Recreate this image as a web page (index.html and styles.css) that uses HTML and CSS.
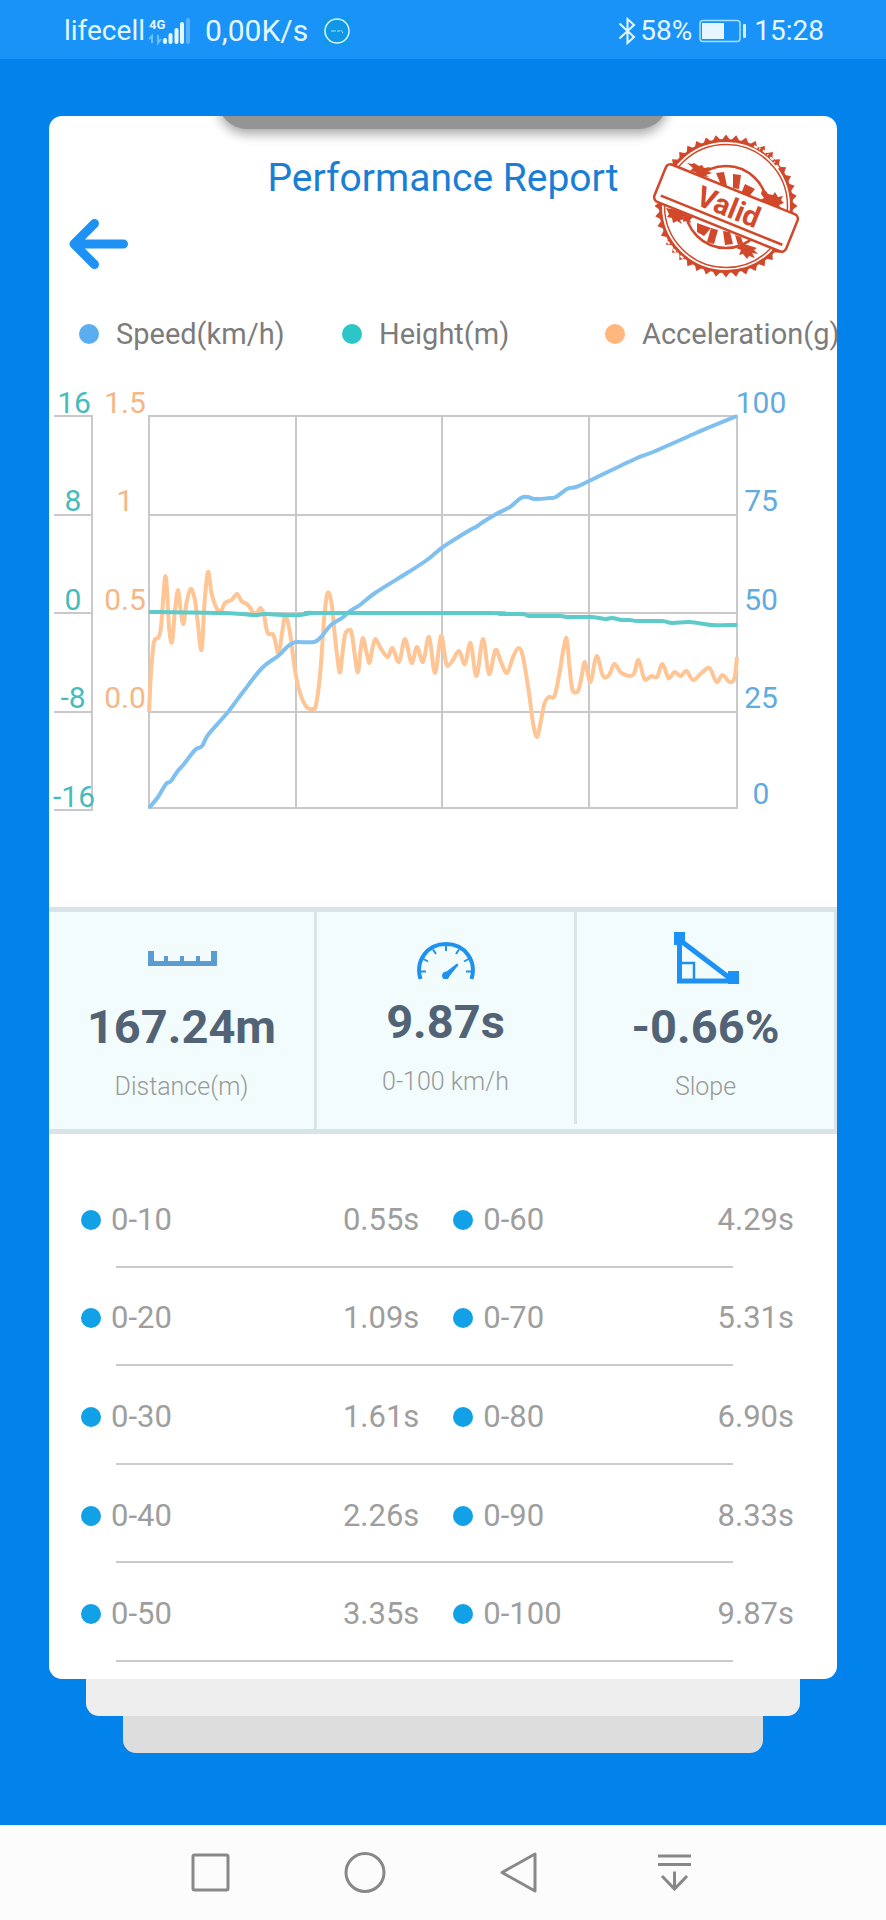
FILE: index.html
```html
<!DOCTYPE html>
<html lang="en">
<head>
    <meta charset="UTF-8">
    <meta name="viewport" content="width=device-width, initial-scale=1.0">
    <title>Performance Report</title>
    <link rel="stylesheet" href="styles.css">
</head>
<body>
    <div class="status-bar">
        <span>lifecell</span>
        <svg class="signal" width="42" height="28" viewBox="0 0 42 28">
            <text x="0" y="12" class="signal-label">4G</text>
            <path d="M3 26V19l-3 3M9 18v8l3-4" class="signal-data"/>
            <path d="M16 23v2M21.500 18v7M27.500 13v12M33 7v18" class="signal-on"/>
            <path d="M39 3v22" class="signal-off"/>
        </svg>
        <span class="net-speed">0,00K/s</span>
        <svg class="app-badge" width="26" height="28" viewBox="0 0 26 28">
            <rect width="26" height="28" fill="#1098e6"/>
            <circle cx="13" cy="14" r="12" fill="none" stroke="#d8f4ff" stroke-width="1.500"/>
            <path d="M7 14h3M11 13v2M13 14h3M17 13l2 3" stroke="#a9e2fa" fill="none"/>
        </svg>
        <svg class="bluetooth" width="18" height="28" viewBox="0 0 18 28">
            <path d="M1.500 6.500L16 20l-6.500 6V2L16 8 1.500 21.500" fill="none" stroke="#e2f7ff" stroke-width="2"/>
        </svg>
        <span>58%</span>
        <svg class="battery" width="48" height="24" viewBox="0 0 48 24">
            <rect x="1" y="1.500" width="40" height="21" rx="3" fill="none" stroke="#a6e2ff" stroke-width="1.500"/>
            <rect x="3" y="4" width="22" height="16" fill="#e6f6ff"/>
            <rect x="44" y="5" width="3" height="14" rx="1" fill="#d0f0ff"/>
        </svg>
        <span>15:28</span>
    </div>

    <main class="content">
        <div class="card">
            <div class="handle"></div>

            <header class="report-header">
                <button type="button" class="back" aria-label="Back">
                    <svg width="60" height="50" viewBox="0 0 60 50">
                        <path d="M25.500 4.500L5 25l20.500 20.500M5 25h49.500" fill="none" stroke="#1e92f4" stroke-width="9" stroke-linecap="round" stroke-linejoin="round"/>
                    </svg>
                </button>
                <h1>Performance Report</h1>
                <svg class="stamp" width="150" height="146" viewBox="0 0 150 146">
                    <g id="stampTeeth"></g>
                    <circle cx="75" cy="73" r="65.500" class="ring" stroke-width="3"/>
                    <circle cx="75" cy="73" r="61.500" class="ring" stroke-width="1.500"/>
                    <circle cx="75" cy="74" r="41" class="ring" stroke-width="2.500"/>
                    <g class="ink">
                        <path d="M65 40l8-1 3 14-6-1zM82 41l8 1-2 14-6-1zM94 51l10 5-7 9-8-2z"/>
                        <path d="M46 90l14 5-7 8-7-4zM60 95l7 2-4 14-7-2zM72 98l7 1 3 12-8 1zM84 102l6 2 2 6-5 2z"/>
                        <path d="M36 30l5 1 2-1 5 3 3-1 2 3 6-1-3 4 5 2-6 2 3 2-10-1-4-4-5-1 3-3z"/>
                        <path d="M111 57l4 1 2 3 5 1 2-3 3 5 5-1-2 4 3 3-5 2 2 4-6-1-9-3-6-5 4-2-3-4z"/>
                        <path d="M15 75l11 2 10 5-4 2 4 2-7 1 2 4-5-3-4 2-1-5-5-1 2-3z"/>
                        <path d="M33 81l9 3-3 3 1 3-5-2-3 1z"/>
                        <path d="M90 110l16 5-3 2 4 4-6-1 3 5-6-2-2 3-4-5-4 1 2-5-5-2 5-2z"/>
                    </g>
                    <path d="M103 13l10 5 9 9 6 9" class="scratch"/>
                    <path d="M16 108l8 10 10 9" class="scratch"/>
                    <g transform="rotate(22 75 75)">
                        <rect x="4" y="55" width="142" height="40" rx="5" fill="#fff" stroke="#d1482a" stroke-width="2.500"/>
                        <path d="M10 88h131" stroke="#d1482a" stroke-width="2.500"/>
                        <text x="77" y="83" class="stamp-text">Valid</text>
                    </g>
                </svg>
            </header>

            <ul class="legend">
                <li><span class="dot speed"></span>Speed(km/h)</li>
                <li><span class="dot height"></span>Height(m)</li>
                <li><span class="dot accel"></span>Acceleration(g)</li>
            </ul>

            <svg class="chart" viewBox="49 380 788 450">
                <g class="grid">
                    <path d="M149 416H737M149 515H737M149 613H737M149 712H737M149 808H737"/>
                    <path d="M149 415V809M296 416V808M442 416V808M589 416V808M737 415V809"/>
                    <path d="M54 416H92M54 515H92M54 613H92M54 712H92M54 810H92M92 415V811"/>
                </g>
                <g class="axis height-axis">
                    <text x="74" y="413">16</text>
                    <text x="73" y="511">8</text>
                    <text x="73" y="610">0</text>
                    <text x="73" y="708">-8</text>
                    <text x="74" y="807">-16</text>
                </g>
                <g class="axis accel-axis">
                    <text x="125" y="413">1.5</text>
                    <text x="125" y="511">1</text>
                    <text x="125" y="610">0.5</text>
                    <text x="125" y="708">0.0</text>
                </g>
                <g class="axis speed-axis">
                    <text x="761" y="413">100</text>
                    <text x="761" y="511">75</text>
                    <text x="761" y="610">50</text>
                    <text x="761" y="708">25</text>
                    <text x="761" y="804">0</text>
                </g>
                <path id="accelLine" class="line accel-line"/>
                <path id="speedLine" class="line speed-line"/>
                <path id="heightLine" class="line height-line"/>
            </svg>

            <section class="stats">
                <div class="stat">
                    <svg width="70" height="68" viewBox="0 0 70 68">
                        <path d="M1 27h6v10h10v-5h4v5h12v-5h4v5h12v-5h4v5h11v-10h6v15H1z" fill="#5b9bd3"/>
                    </svg>
                    <strong>167.24m</strong>
                    <span>Distance(m)</span>
                </div>
                <div class="stat stat-middle">
                    <svg width="58" height="68" viewBox="0 0 58 68">
                        <path d="M3.500 60C-2 42 10 25 29 25S60 42 54.500 60" fill="none" stroke="#1e92ee" stroke-width="4"/>
                        <path d="M4 52.500h5M6.500 40l4.500 2.500M16 30.500l3 4.500M29 26v6M42 30.500L39 35M51.500 40l-4.500 2.500M54 52.500h-5" fill="none" stroke="#1e92ee" stroke-width="2"/>
                        <path d="M40 44.500l1.500 1.500L33 56.500l-2 3.500h-4.500c-3-3-1-7.500 3-7.500z" fill="#1e92ee"/>
                    </svg>
                    <strong>9.87s</strong>
                    <span>0-100 km/h</span>
                </div>
                <div class="stat">
                    <svg width="66" height="68" viewBox="0 0 66 68">
                        <path d="M6.500 14V57H56M8 17l50 38" fill="none" stroke="#1e92f4" stroke-width="5"/>
                        <path d="M8 39h13v17" fill="none" stroke="#1e92f4" stroke-width="2.500"/>
                        <path d="M1 8h11v13H1zM55 47h11v13H55z" fill="#1e92f4"/>
                    </svg>
                    <strong>-0.66%</strong>
                    <span>Slope</span>
                </div>
            </section>

            <table class="times">
                <tbody>
                    <tr><th scope="row">0-10</th><td>0.55s</td><th scope="row">0-60</th><td>4.29s</td></tr>
                    <tr><th scope="row">0-20</th><td>1.09s</td><th scope="row">0-70</th><td>5.31s</td></tr>
                    <tr><th scope="row">0-30</th><td>1.61s</td><th scope="row">0-80</th><td>6.90s</td></tr>
                    <tr><th scope="row">0-40</th><td>2.26s</td><th scope="row">0-90</th><td>8.33s</td></tr>
                    <tr><th scope="row">0-50</th><td>3.35s</td><th scope="row">0-100</th><td>9.87s</td></tr>
                </tbody>
            </table>
        </div>
        <div class="sheet sheet-light"></div>
        <div class="sheet sheet-dark"></div>
    </main>

    <nav class="nav-bar">
        <button type="button" aria-label="Recent apps">
            <svg width="42" height="42" viewBox="0 0 42 42"><rect x="4" y="3" width="35" height="35" rx="1.500"/></svg>
        </button>
        <button type="button" aria-label="Home">
            <svg width="42" height="42" viewBox="0 0 42 42"><circle cx="21" cy="20.500" r="19"/></svg>
        </button>
        <button type="button" aria-label="Back">
            <svg width="42" height="42" viewBox="0 0 42 42"><path d="M35 2V39L2 20.500z" stroke-linejoin="round"/></svg>
        </button>
        <button type="button" aria-label="Hide navigation">
            <svg width="42" height="42" viewBox="0 0 42 42"><path d="M3 4h33M3 12.500h33M19.500 19.500V37M7 24l12.500 13L32 24"/></svg>
        </button>
    </nav>

    <script src="script.js"></script>
</body>
</html>
```

FILE: styles.css
```css
* {
    box-sizing: border-box;
}

body {
    display: flex;
    flex-direction: column;
    min-height: 100vh;
    margin: 0;
    background-color: #0282eb;
    font-family: Roboto, sans-serif;
}

button {
    padding: 0;
    border: none;
    background: none;
    cursor: pointer;
}

svg {
    display: block;
}

/* status bar */
.status-bar {
    display: flex;
    align-items: center;
    height: 59px;
    padding: 2px 62px 0 64px;
    background-color: #1993f7;
    color: #e2f7ff;
    font-size: 28px;
}

.net-speed {
    font-size: 30px;
}

.signal {
    margin: 0 14px 0 4px;
}

.signal-label {
    fill: #e2f7ff;
    font-size: 13px;
    font-weight: bold;
}

.signal-data {
    fill: none;
    stroke: #6fbffb;
    stroke-width: 2;
}

.signal-on,
.signal-off {
    fill: none;
    stroke: #e2f7ff;
    stroke-width: 4;
    stroke-linecap: round;
}

.signal-off {
    stroke: #58b1fa;
}

.app-badge {
    margin-left: 16px;
}

.bluetooth {
    margin: 0 4px 0 auto;
}

.battery {
    margin: 0 7px;
}

/* card */
.content {
    flex: 1;
    padding: 57px 49px 72px;
}

.card {
    overflow: hidden;
    padding-bottom: 17px;
    border-radius: 13px;
    background-color: #fff;
}

.handle {
    width: 57%;
    height: 60px;
    margin: -47px auto 0;
    border-radius: 29px;
    background-color: #949494;
    box-shadow: 0 5px 12px rgba(0, 0, 0, 0.35);
}

.report-header {
    display: grid;
    grid-template-columns: 1fr auto 1fr;
    padding: 4px 20px 0;
}

.back {
    align-self: end;
    justify-self: start;
    margin-bottom: 10px;
}

h1 {
    margin: 21px 0 0;
    color: #1a7fd4;
    font-size: 39px;
    font-weight: normal;
    line-height: 48px;
}

.stamp {
    justify-self: end;
    margin-right: 16px;
}

.ring {
    fill: none;
    stroke: #d1482a;
}

.ink,
.stamp-text,
#stampTeeth {
    fill: #d1482a;
}

.scratch {
    fill: none;
    stroke: #fff;
    stroke-width: 2;
    stroke-dasharray: 4 2 1 3;
}

.stamp-text {
    font-size: 29px;
    font-weight: bold;
    text-anchor: middle;
}

.legend {
    display: flex;
    margin: 37px 0 0;
    padding: 0 0 0 30px;
    list-style: none;
    color: #7c7c7c;
    font-size: 29px;
    line-height: 36px;
    white-space: nowrap;
}

.legend li {
    display: flex;
    flex: 0 0 263px;
    align-items: center;
    gap: 17px;
}

.dot {
    width: 20px;
    height: 20px;
    border-radius: 50%;
}

.speed {
    background-color: #5aaeef;
}

.height {
    background-color: #2cc6c6;
}

.accel {
    background-color: #ffb77d;
}

/* chart */
.chart {
    width: 100%;
    margin: 28px 0 77px;
}

.grid {
    fill: none;
    stroke: #c9c9c9;
    stroke-width: 2;
}

.axis {
    font-size: 30px;
    text-anchor: middle;
}

.height-axis {
    fill: #45bcbc;
}

.accel-axis {
    fill: #f5b785;
}

.speed-axis {
    fill: #62abdf;
}

.line {
    fill: none;
    stroke-width: 4;
    stroke-linejoin: round;
}

.accel-line {
    stroke: #ffc594;
}

.speed-line {
    stroke: #80c0f0;
}

.height-line {
    stroke: #5ccbc9;
}

/* stats */
.stats {
    display: grid;
    grid-template-columns: 268fr 260fr 260fr;
    border-top: 5px solid #d9e4e8;
    border-bottom: 5px solid #d9e4e8;
    background-color: #f2fcfd;
}

.stat {
    display: flex;
    flex-direction: column;
    align-items: center;
    height: 217px;
    padding-top: 12px;
    border-right: 3px solid #d9e4e8;
}

.stat-middle {
    height: 212px;
    padding-top: 7px;
}

.stat strong {
    margin: 7px 0 17px;
    color: #526375;
    font-size: 47px;
    line-height: 56px;
}

.stat span {
    color: #999;
    font-size: 25px;
    font-weight: 300;
    line-height: 30px;
}

/* times */
.times {
    width: 100%;
    height: 493px;
    margin-top: 35px;
    border-spacing: 0;
    table-layout: fixed;
    color: #9e9e9e;
    font-size: 31px;
}

.times tr {
    background: linear-gradient(#cbcbcb, #cbcbcb) no-repeat 67px 100% / calc(100% - 171px) 2px;
}

.times th,
.times td {
    padding: 2px 0 0;
    font-weight: normal;
    text-align: left;
}

.times td {
    text-align: right;
}

.times th::before {
    content: "";
    display: inline-block;
    width: 20px;
    height: 20px;
    margin-right: 10px;
    border-radius: 50%;
    background-color: #12a0e6;
}

.times th:first-child {
    width: 25%;
    padding-left: 32px;
}

.times td:nth-child(2) {
    width: 22%;
}

.times th:nth-child(3) {
    width: 28%;
    padding-left: 34px;
}

.times td:last-child {
    padding-right: 43px;
}

/* sheets under the card */
.sheet {
    height: 37px;
    border-radius: 0 0 13px 13px;
}

.sheet-light {
    margin: 0 37px;
    background-color: #eee;
}

.sheet-dark {
    margin: 0 74px;
    background-color: #ddd;
}

/* navigation bar */
.nav-bar {
    display: flex;
    height: 95px;
    padding: 0 15%;
    background-color: #fcfcfc;
}

.nav-bar button {
    display: flex;
    flex: 1;
    align-items: center;
    justify-content: center;
}

.nav-bar svg {
    fill: none;
    stroke: #888;
    stroke-width: 3;
}
```

FILE: script.js
```javascript
// points are x, y pairs in the chart's viewBox
const accel = [
    149,712, 151,673, 154,642, 158,638, 161,627, 165.5,576, 169,627, 172,642, 175,610, 178,590,
    180.5,610, 183.5,624, 186.5,603, 190.5,589, 194.5,598, 197.5,620, 201.5,650, 204.5,603, 208,572, 211.5,593,
    216.5,608, 221,611, 225,603, 231.5,600, 237,594, 241.5,601, 248,605, 253.5,613, 257.5,612, 260.5,608,
    264,615, 267.5,633, 273.5,635, 278.5,653, 282.5,630, 285.5,615, 290,633, 295,670, 300,693, 306.5,707,
    312,709, 316,705, 320.5,670, 324,620, 327.5,593, 331.5,603, 335,637, 339.5,672, 342,657, 345,635,
    349,630, 352,635, 357.5,672, 360.5,650, 363,638, 366,650, 369.5,663, 372.5,648, 375.5,639, 380,647,
    387.5,657, 392.5,648, 399,662, 405,639, 411.5,663, 417,647, 423,662, 429,637, 435,673, 441,636,
    446,663, 449,665, 453,660, 459,651, 465,664, 470.5,643, 476.5,676, 483,639, 489,674, 495.5,650,
    501,662, 507,673, 513,657, 518.5,648, 523,657, 529,693, 533,723, 537,737, 540.5,723, 544.5,703,
    549,697, 554.5,696, 559.5,673, 566,638, 569.5,667, 572.5,690, 578,691, 581.5,677, 585,662, 590.5,682,
    596.5,656, 603,676, 609,675, 614.5,664, 621.5,673, 633,675, 638.5,660, 644.5,679, 651.5,676, 657,677,
    662.5,664, 668.5,678, 674.5,672, 680.5,676, 686.5,671, 693,680, 701.5,673, 709.5,668, 716.5,682, 722.5,675,
    729.5,682, 734.5,678, 737,657
];

const speed = [
    149,808, 158,797, 166,784, 171,781, 177,772, 184,764, 195,750, 202,746, 208,735, 228,712,
    243,692, 262,668, 278,656, 287,647, 293,643, 298,642, 314,642, 321,637, 331,625, 342,618,
    350,611, 360,605, 375,593, 407,573, 427,560, 443,547, 470,530, 476,527, 483,522, 498,513,
    510,507, 521,498, 528,497, 535,499, 550,498, 556,497, 567,489, 576,487, 589,481, 635,459,
    653,452, 696,433, 710,427, 737,416
];

const height = [
    149,612, 160,612, 225,613, 253,615, 265,614, 282,615, 300,615, 312,613, 320,613, 490,613,
    500,614, 523,614, 530,616, 560,616, 567,617, 592,617, 605,619, 612,618, 622,620, 630,620,
    638,621, 662,621, 672,623, 690,622, 712,625, 737,625
];

// smooth curve through every point
function curve(values) {
    const p = [];
    for (let i = 0; i < values.length; i += 2) {
        p.push([values[i], values[i + 1]]);
    }
    let d = 'M' + p[0];
    for (let i = 0; i < p.length - 1; i++) {
        const a = p[Math.max(i - 1, 0)];
        const b = p[i];
        const c = p[i + 1];
        const e = p[Math.min(i + 2, p.length - 1)];
        d += 'C' + [
            b[0] + (c[0] - a[0]) / 6, b[1] + (c[1] - a[1]) / 6,
            c[0] - (e[0] - b[0]) / 6, c[1] - (e[1] - b[1]) / 6,
            c[0], c[1]
        ];
    }
    return d;
}

document.getElementById('accelLine').setAttribute('d', curve(accel));
document.getElementById('speedLine').setAttribute('d', curve(speed));
document.getElementById('heightLine').setAttribute('d', curve(height));

// teeth around the stamp
let teeth = '';
for (let i = 0; i < 44; i++) {
    teeth += '<path d="M70 8L75 1.5L80 8z" transform="rotate(' + (i * 360 / 44) + ' 75 73)"/>';
}
document.getElementById('stampTeeth').innerHTML = teeth;
```
